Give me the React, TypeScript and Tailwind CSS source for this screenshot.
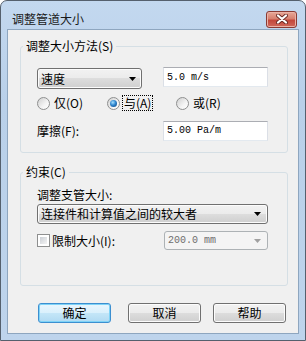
type RadioProps = {
  label: string;
  checked?: boolean;
  focused?: boolean;
};

function DropArrow({ color = '#000000' }: { color?: string }) {
  return (
    <svg width="7" height="4" viewBox="0 0 7 4">
      <path d="M0 0H7L3.5 4Z" fill={color} />
    </svg>
  );
}

function Radio({ label, checked, focused }: RadioProps) {
  return (
    <div className="flex items-center">
      <span className="flex items-center justify-center w-[13px] h-[13px] rounded-full border border-[#8e8f8f] bg-[linear-gradient(135deg,#cfcfcf_0%,#f4f4f4_60%,#ffffff_100%)]">
        {checked && (
          <span className="w-[7px] h-[7px] rounded-full bg-[radial-gradient(circle_at_40%_35%,#a6e0ff_0%,#2f86cf_45%,#0d3f78_100%)]" />
        )}
      </span>
      <span
        className={`ml-[3px] px-[1px] leading-[14px] ${
          focused ? 'outline outline-1 outline-dotted outline-black' : ''
        }`}
      >
        {label}
      </span>
    </div>
  );
}

function TextBox({ value }: { value: string }) {
  return (
    <div className="w-[105px] h-[20px] flex items-center pl-[3px] bg-white border border-[#dbdfe6] border-t-[#abadb3] border-b-[#e3e9ef] font-['Liberation_Mono',monospace] text-[10px] text-black">
      {value}
    </div>
  );
}

function Button({ label, primary }: { label: string; primary?: boolean }) {
  return (
    <div
      className={`w-[73px] h-[20px] rounded-[3px] border flex items-center justify-center leading-[14px] ${
        primary
          ? 'border-[#3c8fd0] shadow-[inset_0_0_0_1px_#7fd3f7] bg-[linear-gradient(180deg,#eaf6fd_0%,#d9f0fc_50%,#c4e6f8_50%,#b0daf2_100%)]'
          : 'border-[#707070] shadow-[inset_0_0_0_1px_#fcfcfc] bg-[linear-gradient(180deg,#f2f2f2_0%,#ebebeb_50%,#dddddd_50%,#cfcfcf_100%)]'
      }`}
    >
      {label}
    </div>
  );
}

export default function App() {
  return (
    <div className="w-[306px] h-[341px] bg-white">
      <div className="w-[306px] h-[341px] flex flex-col rounded-t-[7px] border border-[#55606d] bg-[linear-gradient(180deg,#c3d8ef_0%,#b9d0e9_30%,#bed4ec_100%)] font-['Noto_Sans_CJK_SC',sans-serif] text-[12px] text-black">
        {/* title bar */}
        <div className="h-[28px] flex items-center pt-[8px] pl-[11px] pr-[8px]">
          <span className="text-[12px] leading-[14px] text-[#1a1a1a]">调整管道大小</span>
          <div className="ml-auto w-[31px] h-[17px] rounded-[3px] border border-[#8a3a33] flex items-center justify-center bg-[linear-gradient(180deg,#e8a898_0%,#d7806f_45%,#c3473a_55%,#d0685b_100%)] shadow-[inset_0_0_0_1px_#eab2a6]">
            <svg width="12" height="10" viewBox="0 0 12 10">
              <path d="M2 1.5L10 8.5M10 1.5L2 8.5" stroke="#6b2a24" strokeWidth="4" strokeLinecap="round" />
              <path d="M2 1.5L10 8.5M10 1.5L2 8.5" stroke="#ffffff" strokeWidth="2.2" strokeLinecap="round" />
            </svg>
          </div>
        </div>

        {/* client area */}
        <div className="flex-1 px-[6px] pb-[6px]">
          <div className="h-full border border-[#8ea6bf] bg-[#f0f0f0] pt-[9px] flex flex-col">
            <fieldset className="ml-[12px] w-[268px] p-0 m-0 border border-[#d5dfe5] rounded-[3px]">
              <legend className="ml-[2px] px-[3px] leading-[14px]">调整大小方法(S)</legend>
              <div className="pl-[16px] pr-[19px] pb-[11px]">
                <div className="mt-[14px] flex items-start justify-between h-[22px]">
                  <div className="mt-[1px] w-[105px] h-[21px] rounded-[3px] border border-[#707070] flex items-center pl-[3px] pr-[5px] bg-[linear-gradient(180deg,#f2f2f2_0%,#ebebeb_50%,#dddddd_50%,#cfcfcf_100%)] shadow-[inset_0_0_0_1px_#fcfcfc]">
                    <span className="leading-[14px]">速度</span>
                    <span className="ml-auto flex">
                      <DropArrow />
                    </span>
                  </div>
                  <TextBox value="5.0 m/s" />
                </div>
                <div className="mt-[7px] h-[14px] flex items-center">
                  <div className="w-[70px]">
                    <Radio label="仅(O)" />
                  </div>
                  <div className="w-[69px]">
                    <Radio label="与(A)" checked focused />
                  </div>
                  <Radio label="或(R)" />
                </div>
                <div className="mt-[10px] h-[21px] flex items-center justify-between">
                  <span className="leading-[14px]">摩擦(F):</span>
                  <TextBox value="5.00 Pa/m" />
                </div>
              </div>
            </fieldset>

            <fieldset className="mt-[12px] ml-[12px] w-[268px] p-0 m-0 border border-[#d5dfe5] rounded-[3px]">
              <legend className="ml-[2px] px-[3px] leading-[14px]">约束(C)</legend>
              <div className="pl-[16px] pr-[19px] pb-[35px]">
                <div className="mt-[9px] leading-[14px]">调整支管大小:</div>
                <div className="mt-[2px] h-[20px] rounded-[3px] border border-[#707070] flex items-center pl-[3px] pr-[6px] bg-[linear-gradient(180deg,#f2f2f2_0%,#ebebeb_50%,#dddddd_50%,#cfcfcf_100%)] shadow-[inset_0_0_0_1px_#fcfcfc]">
                  <span className="leading-[14px]">连接件和计算值之间的较大者</span>
                  <span className="ml-auto flex">
                    <DropArrow />
                  </span>
                </div>
                <div className="mt-[7px] h-[19px] flex items-center">
                  <span className="w-[13px] h-[13px] border border-[#8e8f8f] bg-white p-[2px] flex">
                    <span className="flex-1 bg-[linear-gradient(135deg,#cbcfd5_0%,#f4f4f4_100%)]" />
                  </span>
                  <span className="ml-[2px] leading-[14px]">限制大小(I):</span>
                  <div className="ml-auto w-[104px] h-[19px] rounded-[3px] border border-[#adb2b5] bg-[#f4f4f4] flex items-center pl-[3px] pr-[6px] font-['Liberation_Mono',monospace] text-[10px] text-[#6d6d6d]">
                    200.0 mm
                    <span className="ml-auto flex">
                      <DropArrow color="#a0a0a0" />
                    </span>
                  </div>
                </div>
              </div>
            </fieldset>

            <div className="mt-[17px] pl-[30px] flex">
              <Button label="确定" primary />
              <div className="ml-[17px]">
                <Button label="取消" />
              </div>
              <div className="ml-[12px]">
                <Button label="帮助" />
              </div>
            </div>
          </div>
        </div>
      </div>
    </div>
  );
}
